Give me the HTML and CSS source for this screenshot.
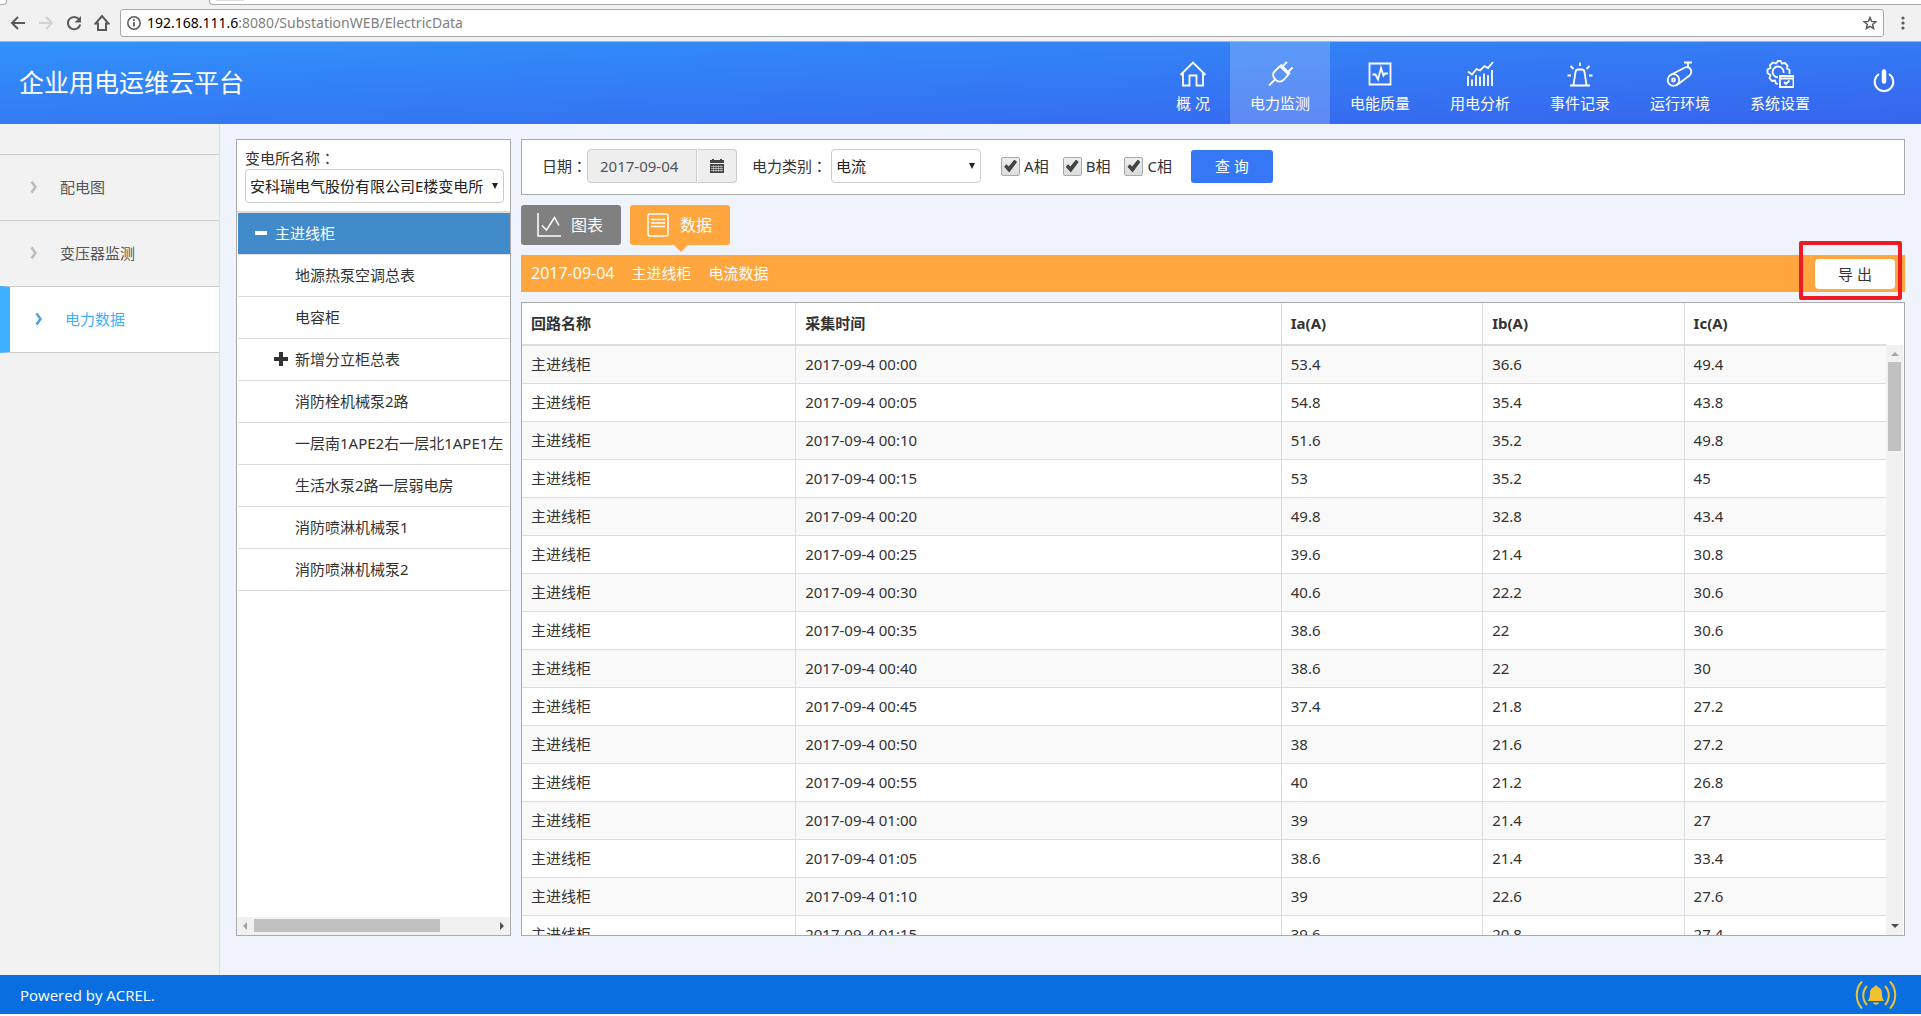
FILE: index.html
```html
<!DOCTYPE html>
<html lang="zh-CN">
<head>
    <meta charset="UTF-8">
    <meta name="viewport" content="width=device-width, initial-scale=1.0">
    <title>企业用电运维云平台</title>
    <link rel="stylesheet" href="styles.css">
</head>
<body>

<!-- Browser bar -->
<div class="browser">
    <div class="tab-strip">
        <span class="tab-left"></span>
        <span class="tab-right"><i class="tab-new"></i></span>
    </div>
    <div class="toolbar">
        <button type="button" class="tool" aria-label="后退">
            <svg width="16" height="16" viewBox="0 0 16 16"><path d="M15 8H2M8 2L2 8l6 6" fill="none" stroke="#5a5a5a" stroke-width="2"/></svg>
        </button>
        <button type="button" class="tool" aria-label="前进">
            <svg width="16" height="16" viewBox="0 0 16 16"><path d="M1 8h13M8 2l6 6-6 6" fill="none" stroke="#d2d2d2" stroke-width="2"/></svg>
        </button>
        <button type="button" class="tool" aria-label="刷新">
            <svg width="16" height="16" viewBox="0 0 16 16"><path d="M13 4.2A6.2 6.2 0 1 0 14.2 9.5" fill="none" stroke="#5a5a5a" stroke-width="2"/><path d="M15 1v6.500H8.500z" fill="#5a5a5a"/></svg>
        </button>
        <button type="button" class="tool" aria-label="主页">
            <svg width="16" height="18" viewBox="0 0 16 18"><path d="M8 2L1.500 9.500H4V16h8V9.500h2.500z" fill="none" stroke="#5a5a5a" stroke-width="2"/></svg>
        </button>
        <div class="address">
            <svg width="14" height="14" viewBox="0 0 14 14"><circle cx="7" cy="7" r="6.200" fill="none" stroke="#5a5a5a" stroke-width="1.500"/><path d="M7 6v4.500M7 3.200v1.700" stroke="#5a5a5a" stroke-width="1.800"/></svg>
            <span class="url"><b>192.168.111.6</b>:8080/SubstationWEB/ElectricData</span>
            <svg width="14" height="14" viewBox="0 0 14 14"><path d="M7 1.500l1.600 3.900 4.200.3-3.200 2.700 1 4.100L7 10.300l-3.600 2.200 1-4.100L1.200 5.700l4.200-.3z" fill="none" stroke="#5a5a5a" stroke-width="1.500"/></svg>
        </div>
        <button type="button" class="tool more" aria-label="菜单">
            <svg width="4" height="14" viewBox="0 0 4 14"><g fill="#5a5a5a"><circle cx="2" cy="2" r="1.600"/><circle cx="2" cy="7" r="1.600"/><circle cx="2" cy="12" r="1.600"/></g></svg>
        </button>
    </div>
</div>

<header class="header">
    <h1>企业用电运维云平台</h1>
    <nav class="nav">
        <a href="#" class="home">
            <svg width="28" height="28" viewBox="0 0 28 28"><path d="M1.500 15L14 2.500 26.500 15M4 13v12.500h6.500V15.500h7v10H24V13"/></svg>
            概 况
        </a>
        <a href="#" class="active">
            <svg width="28" height="28" viewBox="0 0 28 28"><path d="M3 25.500l6.500-6.500M14.500 4.500L24 14M8.500 18.500c-2-3-2-5 0-7l5.500-5.500 8.500 8.500-5 5.500c-2 2-5 2-7 .5zM17 6l4-4M22.500 11.500l4-4"/></svg>
            电力监测
        </a>
        <a href="#">
            <svg width="28" height="28" viewBox="0 0 28 28"><path d="M3.500 3.500h21v21h-21zM6.500 14.500h3l2.500 5 3-11.500 2.500 7.500 1.500-2h3"/></svg>
            电能质量
        </a>
        <a href="#">
            <svg width="28" height="28" viewBox="0 0 28 28"><path d="M2 11.500l4 3 4.500-5.500 3.500 1.500 4.500-4.500 3.500 2 5-6M2 26V16M6 26v-6.500M10 26V15M14 26v-9.500M18 26V13.500M22 26V15M26 26V10"/></svg>
            用电分析
        </a>
        <a href="#">
            <svg width="28" height="28" viewBox="0 0 28 28"><path d="M4 25.500h20M7.500 25l2-13c.3-1.700 1-2.500 2.500-2.500h4c1.500 0 2.200.8 2.500 2.500l2 13M14 2.500V6M4.500 6l3 3M23.500 6l-3 3M1.500 15.500H5M23 15.500h3.500"/></svg>
            事件记录
        </a>
        <a href="#">
            <svg width="28" height="28" viewBox="0 0 28 28"><path d="M18 2.500h8M22 3v5M4.500 15L19 7.500c5-2 8.500 4 4.500 8L11 25"/><circle cx="7.500" cy="20" r="5.800"/><circle cx="7.500" cy="20" r="1.500"/></svg>
            运行环境
        </a>
        <a href="#">
            <svg width="28" height="28" viewBox="0 0 28 28"><path d="M12 24l-2-.5-1-3-3 .5-2.500-3 1-3L1.500 13V9.500l3-1.500-.5-3 3-2.500 3 1L12 1h2.500L16 3.500l3-.5 2.500 2.500-.5 3 2.500 1.500V14"/><path d="M12 17.500a5.500 5.500 0 1 1 5.500-4.500M14 16h13.500v11H14zM14 18.500h13M18 22l2 2 3.500-3.500"/></svg>
            系统设置
        </a>
    </nav>
    <button type="button" class="power" aria-label="退出">
        <svg width="22" height="24" viewBox="0 0 22 24"><path d="M6 5a9.300 9.300 0 1 0 10 0" fill="none" stroke="#fff" stroke-width="2"/><path d="M11 2.500v10" stroke="#fff" stroke-width="4.500" stroke-linecap="round"/></svg>
    </button>
</header>

<div class="page">
    <aside class="sidebar">
        <a href="#"><svg width="8" height="14" viewBox="0 0 8 14"><path d="M1.500 1.500l4 5.500-4 5.500"/></svg>配电图</a>
        <a href="#"><svg width="8" height="14" viewBox="0 0 8 14"><path d="M1.500 1.500l4 5.500-4 5.500"/></svg>变压器监测</a>
        <a href="#" class="active"><svg width="8" height="14" viewBox="0 0 8 14"><path d="M1.500 1.500l4 5.500-4 5.500"/></svg>电力数据</a>
    </aside>

    <main class="content">
        <!-- Substation tree -->
        <section class="tree">
            <div class="station">
                <label for="station">变电所名称<span class="colon" lang="zh-TW">：</span></label>
                <div class="select">
                    <select id="station"><option>安科瑞电气股份有限公司E楼变电所</option></select>
                </div>
            </div>
            <ul>
                <li class="root"><svg width="14" height="14" viewBox="0 0 14 14"><path d="M1 7h12"/></svg>主进线柜</li>
                <li>地源热泵空调总表</li>
                <li>电容柜</li>
                <li class="parent"><svg width="14" height="14" viewBox="0 0 14 14"><path d="M0 7h14M7 0v14"/></svg>新增分立柜总表</li>
                <li>消防栓机械泵2路</li>
                <li>一层南1APE2右一层北1APE1左</li>
                <li>生活水泵2路一层弱电房</li>
                <li>消防喷淋机械泵1</li>
                <li>消防喷淋机械泵2</li>
            </ul>
            <div class="hbar">
                <i class="arrow left"></i>
                <div class="track"><div class="thumb"></div></div>
                <i class="arrow right"></i>
            </div>
        </section>

        <section class="data">
            <form class="filter">
                <label for="date">日期<span class="colon" lang="zh-TW">：</span></label>
                <div class="date-group">
                    <input type="text" id="date" value="2017-09-04" readonly>
                    <button type="button" aria-label="选择日期">
                        <svg width="14" height="14" viewBox="0 0 14 14"><path d="M0 1h2V0h2v1h6V0h2v1h2v3H0zM0 5h14v9H0z" fill="#444"/><path d="M1 7.500h12M1 9.500h12M1 11.500h12" stroke="#eee" stroke-width=".6"/><path d="M3.500 6v7M6 6v7M8.500 6v7M11 6v7" stroke="#eee" stroke-width=".4"/></svg>
                    </button>
                </div>
                <label for="type">电力类别<span class="colon" lang="zh-TW">：</span></label>
                <div class="select type">
                    <select id="type"><option>电流</option></select>
                </div>
                <div class="phases">
                    <label><input type="checkbox" checked>A相</label>
                    <label><input type="checkbox" checked>B相</label>
                    <label><input type="checkbox" checked>C相</label>
                </div>
                <button type="button" class="query">查 询</button>
            </form>

            <div class="tabs">
                <button type="button">
                    <svg width="24" height="24" viewBox="0 0 24 24"><path d="M1 0v23h23M5 12.500l4.500 4.500 8-12.500 4.500 8"/></svg>
                    图表
                </button>
                <button type="button" class="active">
                    <svg width="24" height="24" viewBox="0 0 24 24"><rect x="2" y="1" width="20" height="22" rx="2"/><path d="M5 6.500h14M5 10h14M5 13.500h14"/></svg>
                    数据
                </button>
            </div>

            <div class="caption">
                <span class="day">2017-09-04</span>
                <span>主进线柜</span>
                <span>电流数据</span>
                <div class="export">
                    <button type="button">导 出</button>
                </div>
            </div>

            <div class="grid">
                <div class="rows">
                    <table>
                        <thead>
                            <tr><th class="name">回路名称</th><th class="time">采集时间</th><th>Ia(A)</th><th>Ib(A)</th><th>Ic(A)</th></tr>
                        </thead>
                        <tbody>
                            <tr><td>主进线柜</td><td>2017-09-4 00:00</td><td>53.4</td><td>36.6</td><td>49.4</td></tr>
                            <tr><td>主进线柜</td><td>2017-09-4 00:05</td><td>54.8</td><td>35.4</td><td>43.8</td></tr>
                            <tr><td>主进线柜</td><td>2017-09-4 00:10</td><td>51.6</td><td>35.2</td><td>49.8</td></tr>
                            <tr><td>主进线柜</td><td>2017-09-4 00:15</td><td>53</td><td>35.2</td><td>45</td></tr>
                            <tr><td>主进线柜</td><td>2017-09-4 00:20</td><td>49.8</td><td>32.8</td><td>43.4</td></tr>
                            <tr><td>主进线柜</td><td>2017-09-4 00:25</td><td>39.6</td><td>21.4</td><td>30.8</td></tr>
                            <tr><td>主进线柜</td><td>2017-09-4 00:30</td><td>40.6</td><td>22.2</td><td>30.6</td></tr>
                            <tr><td>主进线柜</td><td>2017-09-4 00:35</td><td>38.6</td><td>22</td><td>30.6</td></tr>
                            <tr><td>主进线柜</td><td>2017-09-4 00:40</td><td>38.6</td><td>22</td><td>30</td></tr>
                            <tr><td>主进线柜</td><td>2017-09-4 00:45</td><td>37.4</td><td>21.8</td><td>27.2</td></tr>
                            <tr><td>主进线柜</td><td>2017-09-4 00:50</td><td>38</td><td>21.6</td><td>27.2</td></tr>
                            <tr><td>主进线柜</td><td>2017-09-4 00:55</td><td>40</td><td>21.2</td><td>26.8</td></tr>
                            <tr><td>主进线柜</td><td>2017-09-4 01:00</td><td>39</td><td>21.4</td><td>27</td></tr>
                            <tr><td>主进线柜</td><td>2017-09-4 01:05</td><td>38.6</td><td>21.4</td><td>33.4</td></tr>
                            <tr><td>主进线柜</td><td>2017-09-4 01:10</td><td>39</td><td>22.6</td><td>27.6</td></tr>
                            <tr><td>主进线柜</td><td>2017-09-4 01:15</td><td>39.6</td><td>20.8</td><td>27.4</td></tr>
                        </tbody>
                    </table>
                </div>
                <div class="vbar">
                    <i class="arrow up"></i>
                    <div class="track"><div class="thumb"></div></div>
                    <i class="arrow down"></i>
                </div>
            </div>
        </section>
    </main>
</div>

<footer class="footer">
    <span>Powered by ACREL.</span>
    <button type="button" aria-label="报警">
        <svg width="44" height="30" viewBox="0 0 44 30"><g fill="none" stroke="#f0c22e" stroke-width="2"><path d="M8 1.500C1 9 1 21 8 28.500M13 6c-5 5.500-5 13.500 0 19M36 1.500c7 7.500 7 19.500 0 27M31 6c5 5.500 5 13.500 0 19"/></g><path d="M22 5.500c1 0 1.500.7 1.700 1.500 3.300 1 4.300 3.500 4.300 6 0 4.500.8 5.500 2 8H14c1.200-2.500 2-3.500 2-8 0-2.500 1-5 4.300-6 .2-.8.7-1.500 1.700-1.500zM19 22.500h6c-.5 3-5.500 3-6 0z" fill="#f0c22e"/></svg>
    </button>
</footer>

</body>
</html>
```

FILE: styles.css
```css
* {
    box-sizing: border-box;
}

body {
    margin: 0;
    padding: 0 0 2px;
    height: 100vh;
    display: flex;
    flex-direction: column;
    font-family: "Noto Sans", "Noto Sans CJK SC", sans-serif;
    font-size: 15px;
    line-height: 20px;
    color: #333;
    background-color: #fff;
}

button, input, select {
    font: inherit;
    color: inherit;
}

button {
    padding: 0;
    border: none;
    background: none;
    cursor: pointer;
}

a {
    text-decoration: none;
}

svg {
    flex: none;
}

.colon {
    font-family: "Noto Sans CJK TC", sans-serif;
    line-height: 1;
}

/* Browser bar */
.browser {
    height: 42px;
    flex: none;
    background-color: #f1f1f1;
    border-bottom: 1px solid #b4b4b4;
}

.tab-strip {
    display: flex;
    justify-content: space-between;
    height: 5px;
}

.tab-left, .tab-right {
    background-color: #fff;
    border-bottom: 1px solid #aaa;
}

.tab-left {
    width: 7px;
    border-right: 1px solid #aaa;
    border-bottom-right-radius: 4px;
}

.tab-right {
    flex: 1;
    margin-left: 202px;
    padding-left: 6px;
    border-left: 1px solid #aaa;
    border-bottom-left-radius: 4px;
}

.tab-new {
    display: block;
    width: 28px;
    height: 1px;
    background-color: #ddd;
}

.toolbar {
    display: flex;
    align-items: center;
    height: 36px;
    padding-left: 10px;
}

.tool {
    display: flex;
    align-items: center;
    width: 28px;
    height: 28px;
}

.address {
    flex: 1;
    display: flex;
    align-items: center;
    gap: 6px;
    height: 28px;
    margin-left: -2px;
    padding: 0 6px;
    background-color: #fff;
    border: 1px solid #a8a8a8;
    border-radius: 3px;
}

.url {
    flex: 1;
    font-size: 14px;
    color: #808080;
}

.url b {
    font-weight: normal;
    color: #000;
}

.more {
    justify-content: center;
    width: 37px;
}

/* Header */
.header {
    display: flex;
    align-items: center;
    height: 82px;
    flex: none;
    padding-left: 19px;
    color: #fff;
    background: linear-gradient(to bottom right, #3191fa, #3764ee);
}

.header h1 {
    margin: 0 auto 0 0;
    padding-bottom: 2px;
    font-size: 25px;
    font-weight: normal;
    line-height: 36px;
}

.nav {
    display: flex;
    height: 100%;
}

.nav a {
    display: flex;
    flex-direction: column;
    align-items: center;
    gap: 5px;
    width: 100px;
    padding-top: 18px;
    color: #fff;
}

.nav .home {
    width: 74px;
}

.nav .active {
    background-color: rgba(255, 255, 255, 0.2);
}

.nav svg, .tabs svg {
    fill: none;
    stroke: #fff;
    stroke-width: 2;
}

.nav svg {
    stroke-width: 1.8;
}

.power {
    display: flex;
    justify-content: center;
    width: 74px;
    margin-left: 17px;
    padding-bottom: 4px;
}

/* Left menu */
.page {
    display: flex;
    flex: 1;
    min-height: 0;
}

.sidebar {
    width: 220px;
    flex: none;
    padding-top: 30px;
    background-color: #f2f2f2;
    border-right: 1px solid #ddd;
}

.sidebar a {
    display: flex;
    align-items: center;
    gap: 22px;
    height: 66px;
    padding: 0 0 2px 30px;
    color: #555;
    border-top: 1px solid #ccc;
}

.sidebar svg {
    fill: none;
    stroke: #bbb;
    stroke-width: 2.5;
}

.sidebar .active {
    height: 67px;
    padding-left: 25px;
    color: #3fb0ff;
    background-color: #fff;
    border-left: 10px solid #3fb0ff;
    border-bottom: 1px solid #ccc;
}

.sidebar .active svg {
    stroke: #4aa3dc;
}

.content {
    flex: 1;
    display: flex;
    gap: 10px;
    min-width: 0;
    padding: 15px 16px 39px;
    background-color: #eff4fc;
}

/* Substation tree */
.tree {
    display: flex;
    flex-direction: column;
    width: 275px;
    flex: none;
    background-color: #fff;
    border: 1px solid #aaa;
}

.station {
    padding: 8px 6px 8px 8px;
}

.station label {
    display: block;
    height: 21px;
}

.select {
    position: relative;
}

.select select {
    display: block;
    width: 100%;
    height: 34px;
    padding: 0 4px;
    appearance: none;
    background-color: #fff;
    border: 1px solid #ccc;
    border-radius: 4px;
    color: #222;
}

.select::after {
    content: "";
    position: absolute;
    right: 6px;
    top: 14px;
    border: 3px solid transparent;
    border-top: 6px solid #222;
    border-bottom: none;
    pointer-events: none;
}

.tree ul {
    flex: 1;
    margin: 0;
    padding: 0;
    list-style: none;
    overflow: hidden;
    border-top: 2px solid #ddd;
}

.tree li {
    display: flex;
    align-items: center;
    gap: 7px;
    height: 42px;
    margin-left: 1px;
    padding: 0 0 2px 57px;
    white-space: nowrap;
    border-bottom: 1px solid #ddd;
}

.tree li svg {
    stroke: #333;
    stroke-width: 4;
}

.tree .root {
    padding-left: 16px;
    color: #fff;
    background-color: #428bca;
}

.tree .root svg {
    stroke: #fff;
}

.tree .parent {
    padding-left: 36px;
}

/* Scroll bars */
.hbar, .vbar {
    display: flex;
    align-items: center;
    justify-content: space-between;
    flex: none;
    background-color: #f1f1f1;
}

.hbar {
    height: 18px;
    padding: 0 6px 1px;
    gap: 7px;
}

.vbar {
    flex-direction: column;
    width: 17px;
    margin-top: 42px;
    padding: 7px 0;
    gap: 6px;
}

.track {
    flex: 1;
}

.thumb {
    background-color: #c1c1c1;
}

.hbar .thumb {
    width: 78%;
    height: 13px;
}

.vbar .thumb {
    width: 13px;
    height: 89px;
}

.arrow {
    border: 4px solid transparent;
}

.arrow.left {
    border-left: none;
    border-right-color: #a3a3a3;
}

.arrow.right {
    border-right: none;
    border-left-color: #505050;
}

.arrow.up {
    border-top: none;
    border-bottom-color: #a3a3a3;
}

.arrow.down {
    border-bottom: none;
    border-top-color: #505050;
}

/* Filter */
.data {
    flex: 1;
    display: flex;
    flex-direction: column;
    min-width: 0;
}

.filter {
    display: flex;
    align-items: center;
    height: 56px;
    flex: none;
    padding: 0 20px 2px;
    background-color: #fff;
    border: 1px solid #aaa;
}

.date-group {
    display: flex;
    margin-right: 15px;
}

.date-group input, .date-group button {
    height: 34px;
    color: #555;
    background-color: #eee;
    border: 1px solid #ccc;
}

.date-group input {
    width: 110px;
    padding: 0 12px;
    border-radius: 4px 0 0 4px;
}

.date-group button {
    display: flex;
    align-items: center;
    justify-content: center;
    width: 40px;
    border-left-color: #fff;
    border-radius: 0 4px 4px 0;
}

.type {
    width: 150px;
    margin-left: 4px;
}

.phases {
    display: flex;
    gap: 14px;
    margin: 0 19px 0 20px;
}

.phases label {
    display: flex;
    align-items: center;
    gap: 4px;
}

.phases input {
    width: 19px;
    height: 19px;
    margin: 0;
    padding: 2px;
    appearance: none;
    background: linear-gradient(#eee, #dcdcdc);
    border: 1px solid #aaa;
    border-radius: 2px;
}

.phases input:checked::before {
    content: "";
    display: block;
    height: 13px;
    background-color: #444;
    clip-path: polygon(0 55%, 18% 36%, 36% 54%, 80% 0, 100% 20%, 40% 100%);
}

.query {
    width: 82px;
    height: 33px;
    color: #fff;
    background-color: #3577f5;
    border-radius: 3px;
}

/* Tabs */
.tabs {
    display: flex;
    gap: 9px;
    padding: 10px 0;
}

.tabs button {
    position: relative;
    display: flex;
    align-items: center;
    gap: 10px;
    width: 100px;
    height: 40px;
    padding-left: 16px;
    font-size: 16px;
    color: #fff;
    background-color: #808080;
    border-radius: 3px;
}

.tabs svg {
    stroke-width: 1.5;
}

.tabs .active {
    background-color: #ffa63e;
}

.tabs .active::after {
    content: "";
    position: absolute;
    left: 44px;
    top: 100%;
    border: 7px solid transparent;
    border-top-color: #ffa63e;
    border-bottom: none;
}

.caption {
    display: flex;
    align-items: center;
    gap: 17px;
    height: 37px;
    flex: none;
    padding: 0 10px;
    color: #fff;
    background-color: #ffa63e;
}

.caption span {
    padding-bottom: 2px;
}

.caption .day {
    font-size: 16px;
}

.export {
    position: relative;
    margin-left: auto;
}

.export button {
    display: block;
    width: 80px;
    height: 30px;
    color: #333;
    background-color: #fff;
    border-radius: 4px;
}

/* Red frame round the export button */
.export::after {
    content: "";
    position: absolute;
    inset: -18px -7px -11px -16px;
    border: 4px solid #ed1c24;
    border-radius: 2px;
    pointer-events: none;
}

/* Data table */
.grid {
    display: flex;
    flex: 1;
    min-height: 0;
    margin-top: 10px;
    padding-right: 1px;
    background-color: #fff;
    border: 1px solid #aaa;
}

.rows {
    flex: 1;
    overflow: hidden;
}

.rows table {
    width: 100%;
    table-layout: fixed;
    border-collapse: separate;
    border-spacing: 0;
}

.rows th, .rows td {
    height: 38px;
    padding: 0 9px 2px;
    text-align: left;
    border-bottom: 1px solid #ddd;
    border-right: 1px solid #ddd;
}

.rows th {
    height: 43px;
    border-bottom-width: 2px;
}

.rows th:last-child, .rows td:last-child {
    border-right: none;
}

.rows .name {
    width: 20.1%;
}

.rows .time {
    width: 35.6%;
}

.rows tbody tr:nth-child(odd) {
    background-color: #f9f9f9;
}

.footer {
    display: flex;
    align-items: center;
    justify-content: space-between;
    height: 39px;
    flex: none;
    padding: 0 23px 0 20px;
    font-family: "Open Sans", sans-serif;
    color: #fff;
    background-color: #096fe1;
}

.footer button {
    display: flex;
}
```
